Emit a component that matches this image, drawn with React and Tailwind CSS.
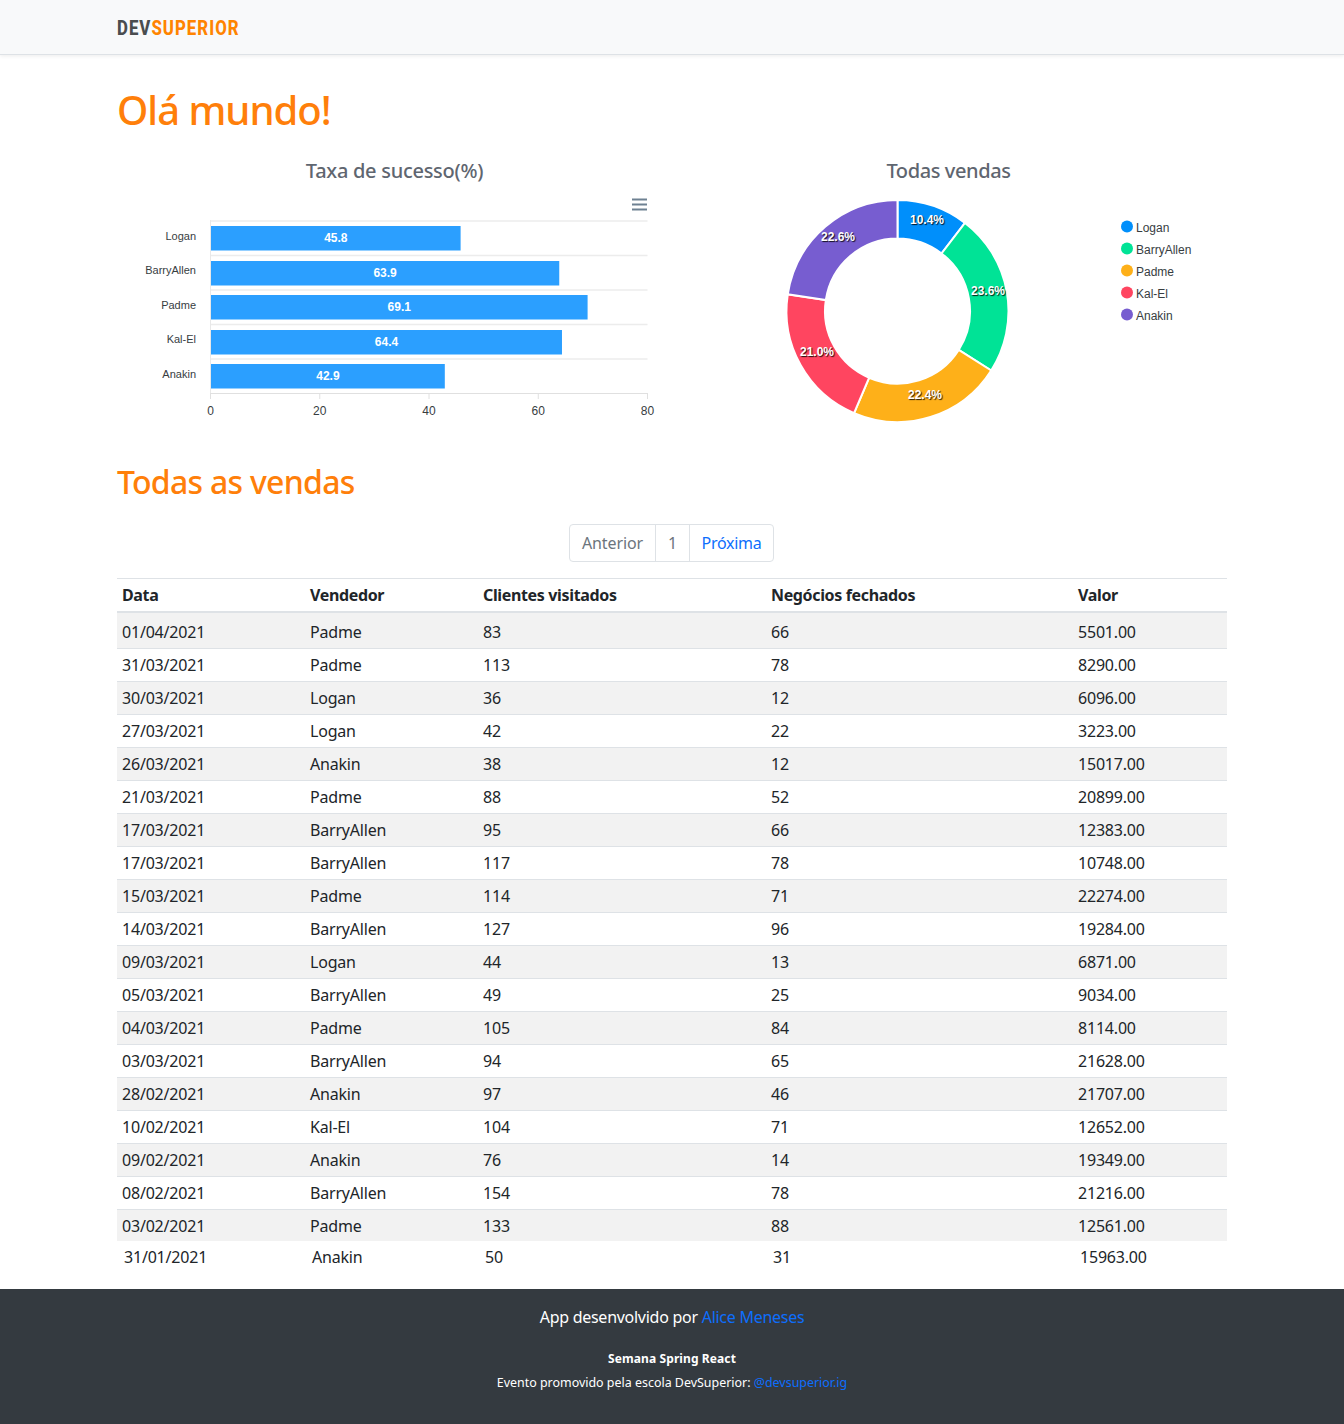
const sales = [
  ["01/04/2021", "Padme", 83, 66, "5501.00"],
  ["31/03/2021", "Padme", 113, 78, "8290.00"],
  ["30/03/2021", "Logan", 36, 12, "6096.00"],
  ["27/03/2021", "Logan", 42, 22, "3223.00"],
  ["26/03/2021", "Anakin", 38, 12, "15017.00"],
  ["21/03/2021", "Padme", 88, 52, "20899.00"],
  ["17/03/2021", "BarryAllen", 95, 66, "12383.00"],
  ["17/03/2021", "BarryAllen", 117, 78, "10748.00"],
  ["15/03/2021", "Padme", 114, 71, "22274.00"],
  ["14/03/2021", "BarryAllen", 127, 96, "19284.00"],
  ["09/03/2021", "Logan", 44, 13, "6871.00"],
  ["05/03/2021", "BarryAllen", 49, 25, "9034.00"],
  ["04/03/2021", "Padme", 105, 84, "8114.00"],
  ["03/03/2021", "BarryAllen", 94, 65, "21628.00"],
  ["28/02/2021", "Anakin", 97, 46, "21707.00"],
  ["10/02/2021", "Kal-El", 104, 71, "12652.00"],
  ["09/02/2021", "Anakin", 76, 14, "19349.00"],
  ["08/02/2021", "BarryAllen", 154, 78, "21216.00"],
  ["03/02/2021", "Padme", 133, 88, "12561.00"],
  ["31/01/2021", "Anakin", 50, 31, "15963.00"],
];

const bars = [
  { name: "Logan", value: 45.8, y: 226, ly: 240 },
  { name: "BarryAllen", value: 63.9, y: 261, ly: 274 },
  { name: "Padme", value: 69.1, y: 295, ly: 309 },
  { name: "Kal-El", value: 64.4, y: 330, ly: 343 },
  { name: "Anakin", value: 42.9, y: 364, ly: 378 },
];

const slices = [
  { name: "Logan", value: 10.4, color: "#008FFB", lx: 927, ly: 224 },
  { name: "BarryAllen", value: 23.6, color: "#00E396", lx: 988, ly: 295 },
  { name: "Padme", value: 22.4, color: "#FEB019", lx: 925, ly: 399 },
  { name: "Kal-El", value: 21.0, color: "#FF4560", lx: 817, ly: 356 },
  { name: "Anakin", value: 22.6, color: "#775DD0", lx: 838, ly: 241 },
];

function slicePath(cx, cy, outer, inner, from, to) {
  const pt = (r, p) => {
    const a = (p / 100) * 2 * Math.PI;
    return `${(cx + r * Math.sin(a)).toFixed(2)} ${(cy - r * Math.cos(a)).toFixed(2)}`;
  };
  const large = to - from > 50 ? 1 : 0;
  return `M${pt(outer, from)} A${outer} ${outer} 0 ${large} 1 ${pt(outer, to)} L${pt(inner, to)} A${inner} ${inner} 0 ${large} 0 ${pt(inner, from)} Z`;
}

function BarChart() {
  const sx = 5.4625;
  const barScale = 5.45;
  return (
    <svg viewBox="117 155 555 280" className="block w-full h-[280px] font-['Liberation_Sans',sans-serif]">
      <text x="394.5" y="178" textAnchor="middle" fill="#5f6670" fontSize="20" fontWeight="500" letterSpacing="-0.28" className="font-['Noto_Sans',sans-serif]">
        Taxa de sucesso(%)
      </text>
      <path d="M632 199.5h15M632 204.5h15M632 209.5h15" stroke="#6e8192" strokeWidth="1.8" fill="none" />
      {[221, 255.5, 290, 324.5, 359].map((y) => (
        <line key={y} x1="210" x2="647.5" y1={y} y2={y} stroke="#ececec" strokeWidth="1.5" />
      ))}
      <line x1="210.5" x2="210.5" y1="220" y2="393" stroke="#e8e8e8" />
      <line x1="210" x2="647.5" y1="393.5" y2="393.5" stroke="#e0e0e0" />
      {[0, 20, 40, 60, 80].map((t) => (
        <g key={t}>
          <line x1={210.5 + t * sx} x2={210.5 + t * sx} y1="393" y2="399" stroke="#e0e0e0" />
          <text x={210.5 + t * sx} y="415" textAnchor="middle" fontSize="12" fill="#373d3f">{t}</text>
        </g>
      ))}
      {bars.map((b) => (
        <g key={b.name}>
          <rect x="211" y={b.y} width={b.value * barScale} height="24.5" fill="#2B9FFF" />
          <text x={211 + (b.value * barScale) / 2} y={b.y + 16} textAnchor="middle" fontSize="12" fontWeight="700" fill="#fff">
            {b.value.toFixed(1)}
          </text>
          <text x="196" y={b.ly} textAnchor="end" fontSize="11" fill="#373d3f">{b.name}</text>
        </g>
      ))}
    </svg>
  );
}

function DonutChart() {
  let acc = 0;
  return (
    <svg viewBox="672 155 555 280" className="block w-full h-[280px] font-['Liberation_Sans',sans-serif]">
      <text x="948.5" y="178" textAnchor="middle" fill="#5f6670" fontSize="20" fontWeight="500" letterSpacing="-0.4" className="font-['Noto_Sans',sans-serif]">
        Todas vendas
      </text>
      {slices.map((s) => {
        const d = slicePath(897.5, 311, 111, 72.5, acc, acc + s.value);
        acc += s.value;
        return <path key={s.name} d={d} fill={s.color} stroke="#fff" strokeWidth="2" />;
      })}
      {slices.map((s) => (
        <text
          key={s.name}
          x={s.lx}
          y={s.ly}
          textAnchor="middle"
          fontSize="12"
          fontWeight="700"
          fill="#fff"
          className="[text-shadow:1px_1px_1px_rgba(0,0,0,0.85)]"
        >
          {s.value.toFixed(1)}%
        </text>
      ))}
      {slices.map((s, i) => (
        <g key={s.name}>
          <circle cx="1127" cy={226.5 + i * 22} r="6" fill={s.color} />
          <text x="1136" y={232 + i * 22} fontSize="12" fill="#373d3f">{s.name}</text>
        </g>
      ))}
    </svg>
  );
}

export default function App() {
  return (
    <div className="min-h-[1424px] bg-white font-['Noto_Sans',sans-serif] text-[#212529]">
      <nav className="h-[55px] bg-[#f8f9fa] border-b border-[#dee2e6] shadow-[0_1px_4px_rgba(0,0,0,0.08)]">
        <div className="mx-auto w-[1140px] px-[15px] h-full flex items-center">
          <a className="inline-block origin-left scale-x-[0.84] whitespace-nowrap text-[20px] leading-none font-extrabold tracking-[1.2px] font-['Roboto',sans-serif] pt-[1px]">
            <span className="text-[#4a4d4f]">DEV</span>
            <span className="text-[#ff8400]">SUPERIOR</span>
          </a>
        </div>
      </nav>

      <main className="mx-auto w-[1140px] px-[15px] pt-[31px]">
        <h1 className="text-[40px] leading-[48px] font-medium tracking-[-1px] text-[#ff7f0a]">Olá mundo!</h1>

        <div className="grid grid-cols-2 mt-[21px]">
          <BarChart />
          <DonutChart />
        </div>

        <h2 className="mt-[28px] text-[32px] leading-[38px] font-medium tracking-[-0.73px] text-[#ff7f0a]">Todas as vendas</h2>

        <div className="mt-[23px] flex justify-center">
          <ul className="flex h-[38px] mr-[1px] border border-[#dee2e6] rounded text-base leading-[36px]">
            <li className="w-[86px] text-center text-[#6c757d] border-r border-[#dee2e6] tracking-[-0.1px]">Anterior</li>
            <li className="w-[34px] text-center text-[#6c757d] border-r border-[#dee2e6]">1</li>
            <li className="w-[83px] text-center text-[#0d6efd] tracking-[-0.3px]">Próxima</li>
          </ul>
        </div>

        <table className="mt-[16px] w-full table-fixed border-collapse text-base tracking-[-0.2px]">
          <colgroup>
            <col className="w-[188px]" />
            <col className="w-[173px]" />
            <col className="w-[288px]" />
            <col className="w-[307px]" />
            <col className="w-[154px]" />
          </colgroup>
          <thead>
            <tr className="h-[33px] border-t border-b-2 border-[#dee2e6] font-bold tracking-[-0.35px]">
              <th className="px-[5px] pt-[1px] text-left">Data</th>
              <th className="px-[5px] pt-[1px] text-left">Vendedor</th>
              <th className="px-[5px] pt-[1px] text-left">Clientes visitados</th>
              <th className="px-[5px] pt-[1px] text-left">Negócios fechados</th>
              <th className="px-[5px] pt-[1px] text-left">Valor</th>
            </tr>
          </thead>
          <tbody>
            {sales.map((row, i) => {
              const last = i === sales.length - 1;
              const beforeLast = i === sales.length - 2;
              const height = i === 0 ? "h-[37px]" : beforeLast ? "h-[31px]" : last ? "h-[32px]" : "h-[33px]";
              return (
                <tr
                  key={i}
                  className={`${height} ${last || beforeLast ? "" : "border-b border-[#dee2e6]"} ${i % 2 === 0 ? "bg-[#f2f2f2]" : ""}`}
                >
                  {row.map((cell, j) => (
                    <td key={j} className={`${last ? "pl-[7px]" : "pl-[5px]"} ${i === 0 ? "pt-[3px]" : beforeLast ? "pt-[2px]" : ""}`}>
                      {cell}
                    </td>
                  ))}
                </tr>
              );
            })}
          </tbody>
        </table>
      </main>

      <footer className="mt-[16px] h-[135px] bg-[#343a40] text-center text-white pt-[16px]">
        <p className="text-[16px] leading-[24px] tracking-[-0.27px]">
          App desenvolvido por <a className="text-[#0d6efd]">Alice Meneses</a>
        </p>
        <p className="mt-[21px] text-[12px] leading-[18px] font-bold tracking-[0.1px]">Semana Spring React</p>
        <p className="mt-[6px] text-[12.45px] leading-[18px]">
          Evento promovido pela escola DevSuperior: <a className="text-[#0d6efd]">@devsuperior.ig</a>
        </p>
      </footer>
    </div>
  );
}
